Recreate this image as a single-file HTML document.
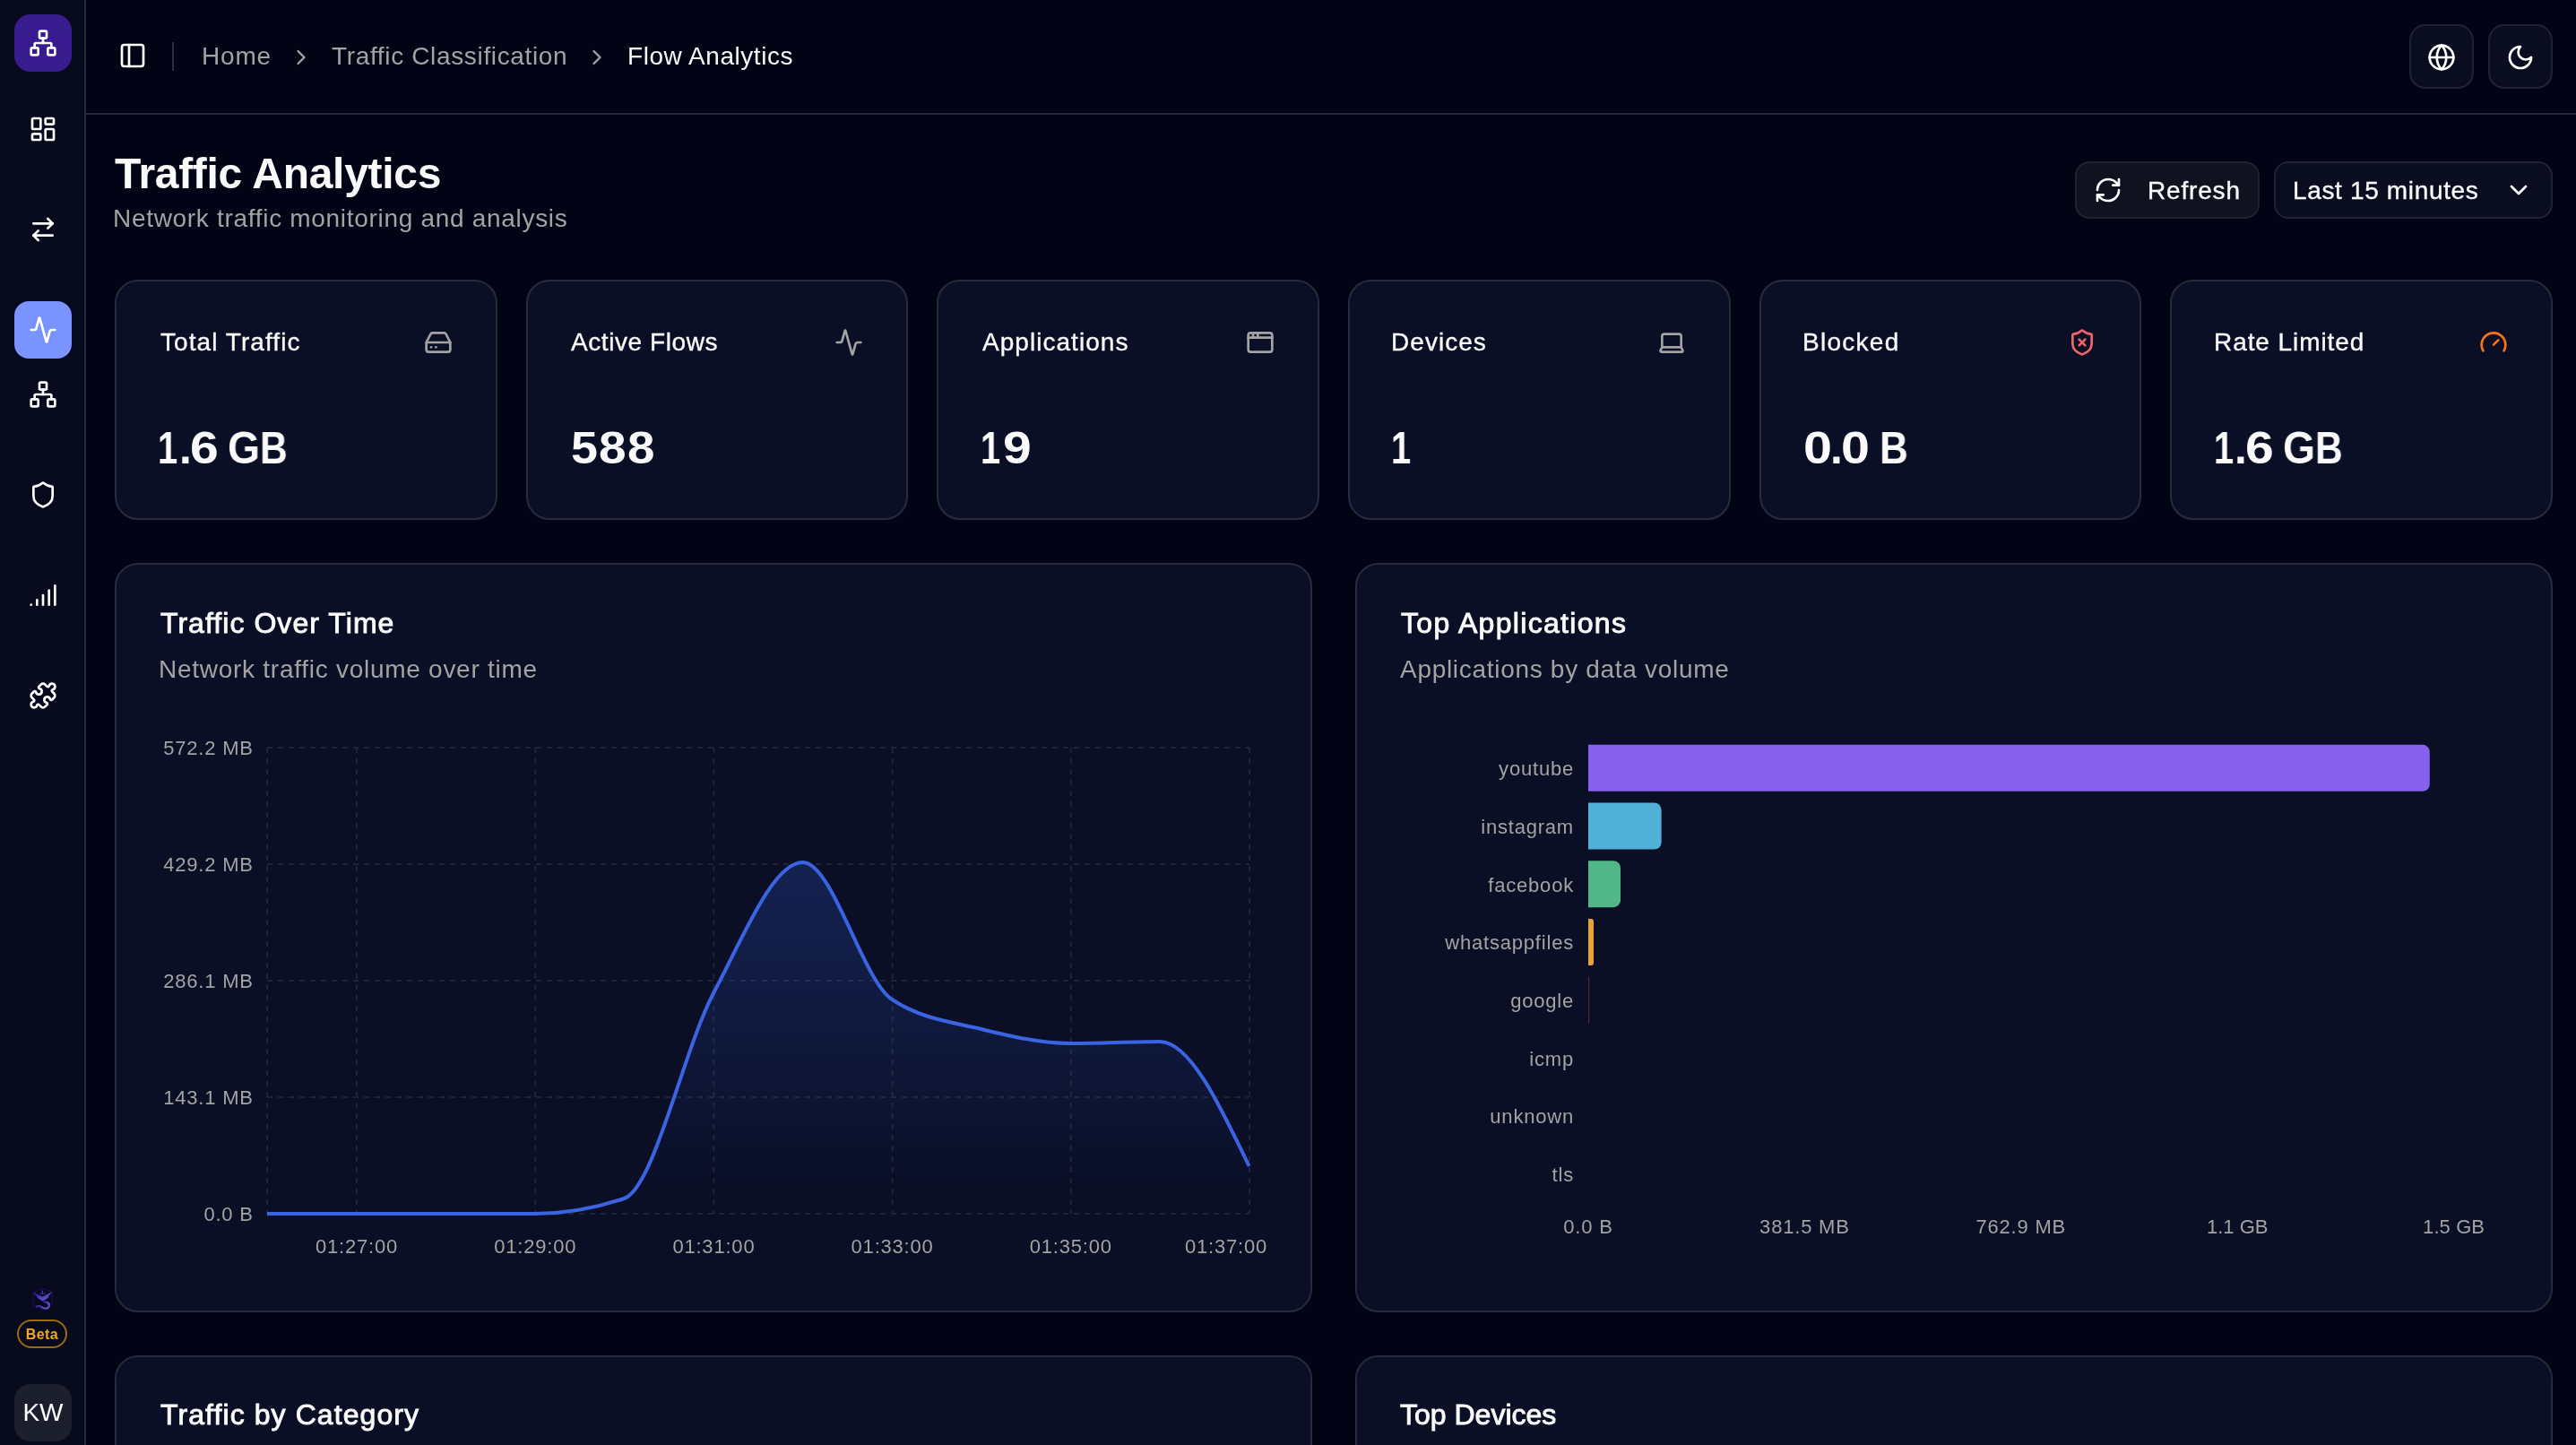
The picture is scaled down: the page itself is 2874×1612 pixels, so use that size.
<!DOCTYPE html>
<html lang="en">
<head>
<meta charset="utf-8">
<title>Traffic Analytics</title>
<style>
*{box-sizing:border-box;margin:0;padding:0}
html,body{width:2874px;height:1612px;overflow:hidden;background:#020416}
@media (max-width:2000px){html{zoom:.5}.bc{transform:translateY(-1.5px)}.ttl{transform:translateY(1.5px)}.psub{transform:translateY(-.5px)}.btx{transform:translateY(-2px)}.ct{transform:translateY(1.5px)}.cs{transform:translateY(-2px)}.ct2{transform:translateY(3.5px)}.vals .gl{top:470px}}
body{font-family:"Liberation Sans",sans-serif;color:#fafafa;position:relative}
.abs{position:absolute}
.t,.abs,svg{will-change:transform}
.sidebar{position:absolute;left:0;top:0;width:96px;height:1612px;background:#070a1c;border-right:2px solid #262a3a}
.header{position:absolute;left:96px;top:0;width:2778px;height:128px;border-bottom:2px solid #262a3a}
.ico{position:absolute;width:32px;height:32px;fill:none;stroke:currentColor;stroke-width:2;stroke-linecap:round;stroke-linejoin:round}
.t{position:absolute;white-space:nowrap;line-height:40px;letter-spacing:.70px}
.lab{letter-spacing:1.1px;-webkit-text-stroke:.35px currentColor}
.btx{-webkit-text-stroke:.35px currentColor}
.gl{position:absolute;top:468px;font-size:49.6px;line-height:64px;font-weight:700;transform-origin:0 0;will-change:transform}
.card{position:absolute;background:#0a0f26;border:2px solid #272b3c;border-radius:26px}
.gray{color:#a3a3a3}
</style>
</head>
<body>
<!-- SIDEBAR -->
<div class="sidebar"></div>
<div class="abs" style="left:16px;top:16px;width:64px;height:64px;border-radius:18px;background:#371b8f"></div>
<svg class="ico" style="left:32px;top:32px;color:#fff" viewBox="0 0 24 24"><rect x="16" y="16" width="6" height="6" rx="1"/><rect x="2" y="16" width="6" height="6" rx="1"/><rect x="9" y="2" width="6" height="6" rx="1"/><path d="M5 16v-3a1 1 0 0 1 1-1h12a1 1 0 0 1 1 1v3"/><path d="M12 12V8"/></svg>


<!-- sidebar nav icons -->
<svg class="ico" style="left:32px;top:128px;color:#fff" viewBox="0 0 24 24"><rect width="7" height="9" x="3" y="3" rx="1"/><rect width="7" height="5" x="14" y="3" rx="1"/><rect width="7" height="9" x="14" y="12" rx="1"/><rect width="7" height="5" x="3" y="16" rx="1"/></svg>
<svg class="ico" style="left:32px;top:240px;color:#fff" viewBox="0 0 24 24"><path d="m16 3 4 4-4 4"/><path d="M20 7H4"/><path d="m8 21-4-4 4-4"/><path d="M4 17h16"/></svg>
<div class="abs" style="left:16px;top:336px;width:64px;height:64px;border-radius:16px;background:#7b93ff"></div>
<svg class="ico" style="left:32px;top:352px;color:#fff" viewBox="0 0 24 24"><path d="M22 12h-2.48a2 2 0 0 0-1.93 1.46l-2.35 8.36a.25.25 0 0 1-.48 0L9.24 2.18a.25.25 0 0 0-.48 0l-2.35 8.36A2 2 0 0 1 4.49 12H2"/></svg>
<svg class="ico" style="left:32px;top:424px;color:#fff" viewBox="0 0 24 24"><rect x="16" y="16" width="6" height="6" rx="1"/><rect x="2" y="16" width="6" height="6" rx="1"/><rect x="9" y="2" width="6" height="6" rx="1"/><path d="M5 16v-3a1 1 0 0 1 1-1h12a1 1 0 0 1 1 1v3"/><path d="M12 12V8"/></svg>
<svg class="ico" style="left:32px;top:536px;color:#fff" viewBox="0 0 24 24"><path d="M20 13c0 5-3.5 7.5-7.66 8.95a1 1 0 0 1-.67-.01C7.5 20.5 4 18 4 13V6a1 1 0 0 1 1-1c2 0 4.5-1.2 6.24-2.72a1.17 1.17 0 0 1 1.52 0C14.51 3.81 17 5 19 5a1 1 0 0 1 1 1z"/></svg>
<svg class="ico" style="left:32px;top:648px;color:#fff" viewBox="0 0 24 24"><path d="M2 20h.01"/><path d="M7 20v-4"/><path d="M12 20v-8"/><path d="M17 20V8"/><path d="M22 4v16"/></svg>
<svg class="ico" style="left:32px;top:760px;color:#fff" viewBox="0 0 24 24"><path d="M15.39 4.39a1 1 0 0 0 1.68-.474 2.5 2.5 0 1 1 3.014 3.015 1 1 0 0 0-.474 1.68l1.683 1.682a2.414 2.414 0 0 1 0 3.414L19.61 15.39a1 1 0 0 1-1.68-.474 2.5 2.5 0 1 0-3.014 3.015 1 1 0 0 1 .474 1.68l-1.683 1.682a2.414 2.414 0 0 1-3.414 0L8.61 19.61a1 1 0 0 0-1.68.474 2.5 2.5 0 1 1-3.014-3.015 1 1 0 0 0 .474-1.68l-1.683-1.682a2.414 2.414 0 0 1 0-3.414L4.39 8.61a1 1 0 0 1 1.68.474 2.5 2.5 0 1 0 3.014-3.015 1 1 0 0 1-.474-1.68l1.683-1.682a2.414 2.414 0 0 1 3.414 0z"/></svg>
<!-- bottom logo -->
<svg class="abs" style="left:30px;top:1430px;width:36px;height:36px" viewBox="0 0 36 36">
<defs><linearGradient id="dg" x1="0" y1="0" x2="1" y2="1"><stop offset="0" stop-color="#3a1ba6"/><stop offset="1" stop-color="#6a5cd6"/></linearGradient></defs>
<path d="M17.4 7.2 28 11.2V25.6L17.2 31.4 7 25.6V12.6Z" fill="none" stroke="#1d0f5e" stroke-width="1"/>
<path d="M6.2 11.3C9 12.8 12 14.2 14.8 15.6L17.2 16.4 19.6 15.4C22.4 14 25.4 12.4 28.2 10.9 26.6 13.4 24.8 15.2 23.2 16.4L24.6 16.8C22.6 18.8 20 20.4 17.4 21.4 14.6 20.2 12.2 18.4 10.6 16.6L11.8 16.2C9.6 14.8 7.6 13.2 6.2 11.3Z" fill="url(#dg)"/>
<path d="M17.3 9.2C18.2 10.8 18.2 12.6 17.3 14.4 16.4 12.6 16.4 10.8 17.3 9.2ZM14.4 12.2C15.6 12.8 16.2 13.6 16.2 14.6 15.2 14.2 14.6 13.4 14.4 12.2ZM20.4 11.6C20.2 12.8 19.6 13.8 18.6 14.4 18.8 13.2 19.4 12.2 20.4 11.6Z" fill="#5a46c4"/>
<path d="M17.4 21.4C19.6 21.6 22.6 21.4 24.6 22.6 26.4 23.8 26.4 26.6 25.4 28.4 24.2 30.6 21.6 31.2 19.6 30.6 17 29.8 14.6 27.6 12 27.4 11 27.4 10.4 28.6 10.2 30.4 9.6 28.4 10.2 26.4 12 26 14.8 25.4 17.2 27.6 19.8 28.4 21.6 29 23.6 28 23.6 26.4 23.6 24.6 21.2 23.8 18.8 22.8Z" fill="url(#dg)"/>
</svg>
<div class="abs" style="left:19px;top:1472px;width:56px;height:32px;border-radius:16px;border:2px solid #9a6a12;color:#f5a623;font-size:16px;line-height:30px;font-weight:700;letter-spacing:.4px;text-align:center">Beta</div>
<div class="abs" style="left:16px;top:1544px;width:64px;height:64px;border-radius:18px;background:#1b1e2c;color:#fff;font-size:28px;line-height:64px;text-align:center">KW</div>

<!-- HEADER -->
<div class="header"></div>
<svg class="ico" style="left:132px;top:46px;color:#fff" viewBox="0 0 24 24"><rect width="18" height="18" x="3" y="3" rx="2"/><path d="M9 3v18"/></svg>
<div class="abs" style="left:192px;top:47px;width:2px;height:32px;background:#2a2e3e"></div>
<div class="t gray bc" style="left:224.60px;top:43px;font-size:28px;letter-spacing:0.825px">Home</div>
<svg class="ico" style="left:322px;top:49.5px;width:28px;height:28px;color:#a3a3a3" viewBox="0 0 24 24"><path d="m9 18 6-6-6-6"/></svg>
<div class="t gray bc" style="left:370.18px;top:43px;font-size:28px;letter-spacing:0.652px">Traffic Classification</div>
<svg class="ico" style="left:652px;top:49.5px;width:28px;height:28px;color:#a3a3a3" viewBox="0 0 24 24"><path d="m9 18 6-6-6-6"/></svg>
<div class="t bc" style="left:700.00px;top:43px;font-size:28px;letter-spacing:0.546px">Flow Analytics</div>

<div class="abs" style="left:2688px;top:27px;width:72px;height:72px;border-radius:18px;background:#0a0d1f;border:2px solid #1e2132"></div>
<svg class="ico" style="left:2708px;top:48px;color:#fff" viewBox="0 0 24 24"><circle cx="12" cy="12" r="10"/><path d="M12 2a14.5 14.5 0 0 0 0 20 14.5 14.5 0 0 0 0-20"/><path d="M2 12h20"/></svg>
<div class="abs" style="left:2776px;top:27px;width:72px;height:72px;border-radius:18px;background:#0a0d1f;border:2px solid #1e2132"></div>
<svg class="ico" style="left:2796px;top:48px;color:#fff" viewBox="0 0 24 24"><path d="M12 3a6 6 0 0 0 9 9 9 9 0 1 1-9-9Z"/></svg>

<!-- PAGE TITLE -->
<div class="t ttl" style="left:127.61px;top:166px;font-size:48px;line-height:56px;font-weight:700;letter-spacing:-0.290px">Traffic Analytics</div>
<div class="t gray psub" style="left:125.60px;top:224px;font-size:28px;letter-spacing:0.695px">Network traffic monitoring and analysis</div>

<div class="abs" style="left:2315px;top:180px;width:206px;height:64px;border-radius:16px;background:#10131f;border:2px solid #1f2233"></div>
<svg class="ico" style="left:2336px;top:196px;color:#fff" viewBox="0 0 24 24"><path d="M3 12a9 9 0 0 1 9-9 9.75 9.75 0 0 1 6.74 2.74L21 8"/><path d="M21 3v5h-5"/><path d="M21 12a9 9 0 0 1-9 9 9.75 9.75 0 0 1-6.74-2.74L3 16"/><path d="M8 16H3v5"/></svg>
<div class="t btx" style="left:2395.81px;top:193px;font-size:28px;letter-spacing:0.825px">Refresh</div>
<div class="abs" style="left:2537px;top:180px;width:311px;height:64px;border-radius:16px;background:#0a0d1f;border:2px solid #1f2233"></div>
<div class="t btx" style="left:2557.60px;top:193px;font-size:28px;letter-spacing:0.651px">Last 15 minutes</div>
<svg class="ico" style="left:2794px;top:196px;color:#fff" viewBox="0 0 24 24"><path d="m6 9 6 6 6-6"/></svg>


<!-- STAT CARDS -->
<div class="card" style="left:128px;top:312px;width:426.66px;height:268px"></div>
<div class="t lab" style="left:179.00px;top:362px;font-size:28px;letter-spacing:1.065px">Total Traffic</div>
<svg class="ico" style="left:472.66px;top:366px;color:#a3a3a3" viewBox="0 0 24 24"><line x1="22" x2="2" y1="12" y2="12"/><path d="M5.45 5.11 2 12v6a2 2 0 0 0 2 2h16a2 2 0 0 0 2-2v-6l-3.45-6.89A2 2 0 0 0 16.76 4H7.24a2 2 0 0 0-1.79 1.11z"/><line x1="6" x2="6.01" y1="16" y2="16"/><line x1="10" x2="10.01" y1="16" y2="16"/></svg>
<div class="vals" aria-label="1.6 GB"><span class="gl" style="left:176.24px;transform:scaleX(0.8)">1</span><span class="gl" style="left:200px">.</span><span class="gl" style="left:212.1px;transform:scaleX(1.150)">6</span><span class="gl" style="left:254.14px;transform:scaleX(0.932)">G</span><span class="gl" style="left:289.82px;transform:scaleX(0.858)">B</span></div>
<div class="card" style="left:586.66px;top:312px;width:426.66px;height:268px"></div>
<div class="t lab" style="left:636.60px;top:362px;font-size:28px;letter-spacing:0.573px">Active Flows</div>
<svg class="ico" style="left:931.34px;top:366px;color:#a3a3a3" viewBox="0 0 24 24"><path d="M22 12h-2.48a2 2 0 0 0-1.93 1.46l-2.35 8.36a.25.25 0 0 1-.48 0L9.24 2.18a.25.25 0 0 0-.48 0l-2.35 8.36A2 2 0 0 1 4.49 12H2"/></svg>
<div class="vals" aria-label="588"><span class="gl" style="left:636.94px;transform:scaleX(1.083)">5</span><span class="gl" style="left:667.9px;transform:scaleX(1.108)">8</span><span class="gl" style="left:699.5px;transform:scaleX(1.104)">8</span></div>
<div class="card" style="left:1045.34px;top:312px;width:426.66px;height:268px"></div>
<div class="t lab" style="left:1095.60px;top:362px;font-size:28px;letter-spacing:1.039px">Applications</div>
<svg class="ico" style="left:1390px;top:366px;color:#a3a3a3" viewBox="0 0 24 24"><rect x="2" y="4" width="20" height="16" rx="2"/><path d="M10 4v4"/><path d="M2 8h20"/><path d="M6 4v4"/></svg>
<div class="vals" aria-label="19"><span class="gl" style="left:1093.5px;transform:scaleX(0.8)">1</span><span class="gl" style="left:1118.7px;transform:scaleX(1.150)">9</span></div>
<div class="card" style="left:1504px;top:312px;width:426.66px;height:268px"></div>
<div class="t lab" style="left:1551.60px;top:362px;font-size:28px;letter-spacing:1.045px">Devices</div>
<svg class="ico" style="left:1848.66px;top:366px;color:#a3a3a3" viewBox="0 0 24 24"><path d="M20 16V7a2 2 0 0 0-2-2H6a2 2 0 0 0-2 2v9m16 0H4m16 0 1.28 2.55a1 1 0 0 1-.9 1.45H3.62a1 1 0 0 1-.9-1.45L4 16"/></svg>
<div class="vals" aria-label="1"><span class="gl" style="left:1552.18px;transform:scaleX(0.8)">1</span></div>
<div class="card" style="left:1962.66px;top:312px;width:426.66px;height:268px"></div>
<div class="t lab" style="left:2011.21px;top:362px;font-size:28px;letter-spacing:1.266px">Blocked</div>
<svg class="ico" style="left:2307.34px;top:366px;color:#f0646a" viewBox="0 0 24 24"><path d="M20 13c0 5-3.5 7.5-7.66 8.95a1 1 0 0 1-.67-.01C7.5 20.5 4 18 4 13V6a1 1 0 0 1 1-1c2 0 4.5-1.2 6.24-2.72a1.17 1.17 0 0 1 1.52 0C14.51 3.81 17 5 19 5a1 1 0 0 1 1 1z"/><path d="m14.5 9.5-5 5"/><path d="m9.5 9.5 5 5"/></svg>
<div class="vals" aria-label="0.0 B"><span class="gl" style="left:2012.28px;transform:scaleX(1.158)">0</span><span class="gl" style="left:2042.3px">.</span><span class="gl" style="left:2054.48px;transform:scaleX(1.158)">0</span><span class="gl" style="left:2096.72px;transform:scaleX(0.890)">B</span></div>
<div class="card" style="left:2421.34px;top:312px;width:426.66px;height:268px"></div>
<div class="t lab" style="left:2469.85px;top:362px;font-size:28px;letter-spacing:0.918px">Rate Limited</div>
<svg class="ico" style="left:2766px;top:366px;color:#f97316" viewBox="0 0 24 24"><path d="m12 14 4-4"/><path d="M3.34 19a10 10 0 1 1 17.32 0"/></svg>
<div class="vals" aria-label="1.6 GB"><span class="gl" style="left:2469.6px;transform:scaleX(0.8)">1</span><span class="gl" style="left:2493.34px">.</span><span class="gl" style="left:2505.44px;transform:scaleX(1.150)">6</span><span class="gl" style="left:2547.48px;transform:scaleX(0.932)">G</span><span class="gl" style="left:2583.16px;transform:scaleX(0.858)">B</span></div>

<!-- CHART CARDS -->
<div class="card" style="left:128px;top:628px;width:1336px;height:836px"></div>
<div class="t ct" style="left:179.41px;top:675px;font-size:32px;line-height:40px;font-weight:400;-webkit-text-stroke:.9px currentColor;letter-spacing:1.050px">Traffic Over Time</div>
<div class="t gray cs" style="left:177.41px;top:727px;font-size:28px;letter-spacing:0.732px">Network traffic volume over time</div>
<div class="card" style="left:1512px;top:628px;width:1336px;height:836px"></div>
<div class="t ct" style="left:1562.60px;top:675px;font-size:32px;line-height:40px;font-weight:400;-webkit-text-stroke:.9px currentColor;letter-spacing:1.311px">Top Applications</div>
<div class="t gray cs" style="left:1562px;top:727px;font-size:28px">Applications by data volume</div>
<div class="card" style="left:128px;top:1512px;width:1336px;height:240px"></div>
<div class="t ct2" style="left:178.81px;top:1558px;font-size:32px;line-height:40px;font-weight:400;-webkit-text-stroke:.9px currentColor;letter-spacing:1.086px">Traffic by Category</div>
<div class="card" style="left:1512px;top:1512px;width:1336px;height:240px"></div>
<div class="t ct2" style="left:1562px;top:1558px;font-size:32px;line-height:40px;font-weight:400;-webkit-text-stroke:.9px currentColor;letter-spacing:0">Top Devices</div>

<!-- CHARTS -->
<svg class="abs" style="left:0;top:0;width:2874px;height:1612px;overflow:visible" viewBox="0 0 1437 806" font-family="Liberation Sans, sans-serif">
<defs><linearGradient id="ag" x1="0" y1="0" x2="0" y2="1"><stop offset="5%" stop-color="#3b66e8" stop-opacity="0.22"/><stop offset="95%" stop-color="#3b66e8" stop-opacity="0"/></linearGradient></defs>
<g stroke="#1f2335" stroke-width="1" stroke-dasharray="3 3" fill="none"><line x1="149" y1="417" x2="697" y2="417"/><line x1="149" y1="482" x2="697" y2="482"/><line x1="149" y1="547" x2="697" y2="547"/><line x1="149" y1="612" x2="697" y2="612"/><line x1="149" y1="677" x2="697" y2="677"/><line x1="149" y1="417" x2="149" y2="677"/><line x1="199" y1="417" x2="199" y2="677"/><line x1="298.6" y1="417" x2="298.6" y2="677"/><line x1="398.2" y1="417" x2="398.2" y2="677"/><line x1="497.8" y1="417" x2="497.8" y2="677"/><line x1="597.4" y1="417" x2="597.4" y2="677"/><line x1="697" y1="417" x2="697" y2="677"/></g>
<path d="M149.00,677.00C165.60,677.00,182.20,677.00,198.80,677.00C215.40,677.00,232.00,677.00,248.60,677.00C265.20,677.00,281.80,677.00,298.40,677.00C315.00,677.00,331.60,674.17,348.20,668.50C364.80,662.83,381.40,585.25,398.00,554.00C414.60,522.75,431.20,481.00,447.80,481.00C464.40,481.00,481.00,546.50,497.60,557.50C514.20,568.50,530.80,569.92,547.40,574.00C564.00,578.08,580.60,582.00,597.20,582.00C613.80,582.00,630.40,581.00,647.00,581.00C663.60,581.00,680.20,615.75,696.80,650.50L696.80,677L149,677Z" fill="url(#ag)"/>
<path d="M149.00,677.00C165.60,677.00,182.20,677.00,198.80,677.00C215.40,677.00,232.00,677.00,248.60,677.00C265.20,677.00,281.80,677.00,298.40,677.00C315.00,677.00,331.60,674.17,348.20,668.50C364.80,662.83,381.40,585.25,398.00,554.00C414.60,522.75,431.20,481.00,447.80,481.00C464.40,481.00,481.00,546.50,497.60,557.50C514.20,568.50,530.80,569.92,547.40,574.00C564.00,578.08,580.60,582.00,597.20,582.00C613.80,582.00,630.40,581.00,647.00,581.00C663.60,581.00,680.20,615.75,696.80,650.50" fill="none" stroke="#3a64e2" stroke-width="2"/>
<g fill="#a3a3a3" font-size="11" letter-spacing="0.4" text-anchor="end"><text x="141.4" y="421.2">572.2 MB</text><text x="141.4" y="486.2">429.2 MB</text><text x="141.4" y="551.2">286.1 MB</text><text x="141.4" y="616.2">143.1 MB</text><text x="141.4" y="681.2">0.0 B</text></g>
<g fill="#a3a3a3" font-size="11" letter-spacing="0.4" text-anchor="middle"><text x="199" y="698.9">01:27:00</text><text x="298.6" y="698.9">01:29:00</text><text x="398.2" y="698.9">01:31:00</text><text x="497.8" y="698.9">01:33:00</text><text x="597.4" y="698.9">01:35:00</text><text x="684" y="698.9">01:37:00</text></g>
<path d="M886,415.40H1351.40A4,4 0 0 1 1355.40,419.40V437.40A4,4 0 0 1 1351.40,441.40H886Z" fill="#8561ed"/>
<path d="M886,447.75H922.80A4,4 0 0 1 926.80,451.75V469.75A4,4 0 0 1 922.80,473.75H886Z" fill="#50b0d5"/>
<path d="M886,480.10H900.00A4,4 0 0 1 904.00,484.10V502.10A4,4 0 0 1 900.00,506.10H886Z" fill="#52b788"/>
<path d="M886,512.45H887.50A1.5,1.5 0 0 1 889.00,513.95V536.95A1.5,1.5 0 0 1 887.50,538.45H886Z" fill="#e8a23a"/>
<path d="M886,544.80H886.30A0.30000000000001137,0.30000000000001137 0 0 1 886.60,545.10V570.50A0.30000000000001137,0.30000000000001137 0 0 1 886.30,570.80H886Z" fill="#5a2636"/>
<g fill="#a3a3a3" font-size="11" letter-spacing="0.4" text-anchor="end"><text x="878" y="432.60">youtube</text><text x="878" y="464.95">instagram</text><text x="878" y="497.30">facebook</text><text x="878" y="529.65">whatsappfiles</text><text x="878" y="562.00">google</text><text x="878" y="594.35">icmp</text><text x="878" y="626.70">unknown</text><text x="878" y="659.05">tls</text></g>
<g fill="#a3a3a3" font-size="11" letter-spacing="0.4" text-anchor="middle"><text x="886.0" y="687.9">0.0 B</text><text x="1006.7" y="687.9">381.5 MB</text><text x="1127.4" y="687.9">762.9 MB</text><text x="1248.1" y="687.9" letter-spacing="0">1.1 GB</text><text x="1368.8" y="687.9" letter-spacing="0.05">1.5 GB</text></g>
</svg>
</body>
</html>
